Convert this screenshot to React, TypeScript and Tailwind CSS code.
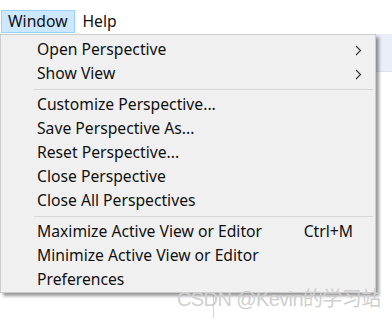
import React from 'react';

type Item =
  | { kind: 'item'; label: string; arrow?: boolean; shortcut?: string }
  | { kind: 'sep' };

const items: Item[] = [
  { kind: 'item', label: 'Open Perspective', arrow: true },
  { kind: 'item', label: 'Show View', arrow: true },
  { kind: 'sep' },
  { kind: 'item', label: 'Customize Perspective...' },
  { kind: 'item', label: 'Save Perspective As...' },
  { kind: 'item', label: 'Reset Perspective...' },
  { kind: 'item', label: 'Close Perspective' },
  { kind: 'item', label: 'Close All Perspectives' },
  { kind: 'sep' },
  { kind: 'item', label: 'Maximize Active View or Editor', shortcut: 'Ctrl+M' },
  { kind: 'item', label: 'Minimize Active View or Editor' },
  { kind: 'item', label: 'Preferences' },
];

const Chevron = () => (
  <svg width="7" height="11" viewBox="0 0 7 11" className="text-[#333]">
    <path d="M1 1 L5.5 5.5 L1 10" fill="none" stroke="currentColor" strokeWidth="1.1" />
  </svg>
);

const MenuRow: React.FC<{ item: Item }> = ({ item }) => {
  if (item.kind === 'sep') {
    return <div className="h-[7px] flex items-center pl-[33px] pr-[2px]"><div className="h-px w-full bg-[#d7d7d7]" /></div>;
  }
  return (
    <div className="h-6 flex items-center pl-[36px] pr-[13px] text-[15.7px] text-[#111]">
      <span className="flex-1">{item.label}</span>
      {item.shortcut && <span className="mr-[9px]">{item.shortcut}</span>}
      {item.arrow && <Chevron />}
    </div>
  );
};

export default function App() {
  return (
    <div
      className="relative w-[392px] h-[318px] bg-white overflow-hidden"
      style={{ fontFamily: '"Noto Sans", "Noto Sans CJK SC", sans-serif' }}
    >
      {/* menu bar */}
      <div className="flex pt-[10px] h-[34px] text-[15.7px] text-[#111]">
        <div className="ml-px h-[23px] px-[6px] flex items-center bg-[#cce8ff] border border-[#99d1ff]">Window</div>
        <div className="h-[23px] px-[8px] flex items-center">Help</div>
      </div>

      {/* editor background peeking out */}
      <div className="absolute left-[376px] top-[34px] w-[16px] h-[38px] bg-[#eaeef8] border-b border-[#dde3ee]" />
      <div className="absolute left-[213px] top-[292px] w-px h-[26px] bg-[#c8d4ec]" />

      {/* dropdown */}
      <div className="absolute left-0 top-[34px] w-[376px] h-[259px] bg-[#f0f0f0] border border-[#cccccc] pt-[3px] shadow-[3px_3px_3px_rgba(0,0,0,0.4)]">
        {items.map((it, i) => (
          <MenuRow key={i} item={it} />
        ))}
      </div>

      {/* watermark */}
      <div className="absolute left-[177px] top-[284px] text-[20px] text-[#cfcfcf] tracking-[-0.6px]" style={{ fontFamily: '"Liberation Sans", "Noto Sans CJK SC", sans-serif' }}>
        CSDN @Kevin的学习站
      </div>
    </div>
  );
}
